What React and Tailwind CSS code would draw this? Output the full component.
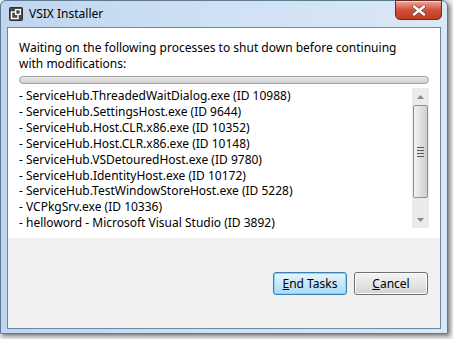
import React from "react";

const items = [
  "- ServiceHub.ThreadedWaitDialog.exe (ID 10988)",
  "- ServiceHub.SettingsHost.exe (ID 9644)",
  "- ServiceHub.Host.CLR.x86.exe (ID 10352)",
  "- ServiceHub.Host.CLR.x86.exe (ID 10148)",
  "- ServiceHub.VSDetouredHost.exe (ID 9780)",
  "- ServiceHub.IdentityHost.exe (ID 10172)",
  "- ServiceHub.TestWindowStoreHost.exe (ID 5228)",
  "- VCPkgSrv.exe (ID 10336)",
  "- helloword - Microsoft Visual Studio (ID 3892)",
];

function AppIcon() {
  return (
    <svg width="14" height="14" viewBox="0 0 14 14">
      <rect x="0.5" y="0.5" width="13" height="13" rx="1" fill="#4a4a4a" stroke="#2e2e2e" />
      <rect x="2.5" y="5" width="6.5" height="6.5" fill="none" stroke="#fff" strokeWidth="1.4" />
      <rect x="6" y="2" width="6" height="6" fill="#fff" />
      <rect x="7.3" y="3.3" width="3.4" height="3.4" fill="#4a4a4a" />
    </svg>
  );
}

export default function App() {
  return (
    <div
      className="w-[453px] h-[339px] bg-[#e9edf1] overflow-hidden"
      style={{ fontFamily: '"Noto Sans", "Open Sans", sans-serif' }}
    >
      <div className="w-[448px] h-[334px] rounded-t-[6px] border border-[#5d7a93] bg-gradient-to-r from-[#bfd6ee] via-[#cfe1f4] to-[#d9e8f6] shadow-[2px_2px_4px_rgba(0,0,0,0.5)] flex flex-col px-[6px] pb-[4px]">
        {/* Title bar */}
        <div className="h-[26px] flex items-start shrink-0">
          <div className="flex items-center gap-[6px] pt-[6px] pl-[2px]">
            <AppIcon />
            <span className="text-[12px] leading-[14px] text-black">VSIX Installer</span>
          </div>
          <div className="ml-auto w-[47px] h-[20px] -mt-px mr-[-1px] rounded-b-[5px] border border-[#6b2b22] bg-gradient-to-b from-[#e9a99c] via-[#d0513b] to-[#c13a22] flex items-center justify-center shadow-[inset_0_1px_0_rgba(255,255,255,0.5)]">
            <svg width="14" height="11" viewBox="0 0 14 11">
              <path d="M2 1.5 L12 9.5 M12 1.5 L2 9.5" stroke="#3a3a3a" strokeWidth="4" strokeLinecap="round" opacity="0.55" />
              <path d="M2 1.5 L12 9.5 M12 1.5 L2 9.5" stroke="#ffffff" strokeWidth="2.4" strokeLinecap="round" />
            </svg>
          </div>
        </div>
        {/* Client area */}
        <div className="flex-1 border border-[#6e889e] bg-[#f0f0f0] flex flex-col">
          <div className="bg-white px-[11px] pt-[12px] pb-[8px] flex flex-col">
            <p className="max-w-[392px] text-[12px] leading-[16px] text-black">
              Waiting on the following processes to shut down before continuing with modifications:
            </p>
            <div className="mt-[4px] h-[8px] rounded-[4px] border border-[#a0a0a0] bg-gradient-to-b from-[#e8e8e8] to-[#d0d0d0]" />
            <div className="mt-[4px] h-[142px] flex">
              <div className="flex-1 overflow-hidden">
                {items.map((t) => (
                  <div key={t} className="text-[12px] leading-[15.9px] text-black whitespace-nowrap">
                    {t}
                  </div>
                ))}
              </div>
              <div className="w-[17px] h-[140px] bg-[#ebebeb] flex flex-col items-center">
                <div className="h-[17px] flex items-center justify-center">
                  <svg width="7" height="4" viewBox="0 0 7 4"><path d="M0 4 L3.5 0 L7 4 Z" fill="#8a8a8a" /></svg>
                </div>
                <div className="w-[15px] h-[93px] rounded-[2px] border border-[#8e8f8f] bg-gradient-to-r from-[#f2f2f2] via-[#e0e0e0] to-[#cfcfcf] flex flex-col items-center justify-center gap-[2px]">
                  <div className="w-[7px] h-px bg-[#555]" />
                  <div className="w-[7px] h-px bg-[#555]" />
                  <div className="w-[7px] h-px bg-[#555]" />
                  <div className="w-[7px] h-px bg-[#555]" />
                </div>
                <div className="flex-1" />
                <div className="h-[17px] flex items-center justify-center">
                  <svg width="7" height="4" viewBox="0 0 7 4"><path d="M0 0 L7 0 L3.5 4 Z" fill="#8a8a8a" /></svg>
                </div>
              </div>
            </div>
          </div>
          <div className="flex-1 flex justify-end items-start pt-[34px] pr-[12px] gap-[7px]">
            <button className="w-[74px] h-[23px] rounded-[3px] border border-[#3c7fb1] bg-gradient-to-b from-[#e8f6fd] via-[#c8e8f8] to-[#a9dbf6] shadow-[inset_0_0_0_1px_#8ad2f5] text-[12px] text-black flex items-center justify-center">
              <span><span className="underline">E</span>nd Tasks</span>
            </button>
            <button className="w-[74px] h-[23px] rounded-[3px] border border-[#707070] bg-gradient-to-b from-[#f4f4f4] via-[#e6e6e6] to-[#d3d3d3] shadow-[inset_0_0_0_1px_#fcfcfc] text-[12px] text-black flex items-center justify-center">
              <span><span className="underline">C</span>ancel</span>
            </button>
          </div>
        </div>
      </div>
    </div>
  );
}
